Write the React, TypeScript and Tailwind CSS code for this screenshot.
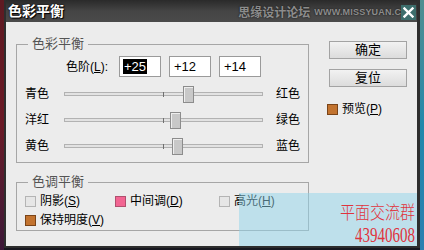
const UI = "font-['Liberation_Sans','Noto_Sans_CJK_SC',sans-serif]"

function Box({ color }: { color?: "orange" | "pink" }) {
  const fill =
    color === "orange"
      ? "bg-[#c2732f] border-[#7a4418]"
      : color === "pink"
        ? "bg-[#f26592] border-[#b0506e]"
        : "bg-[#e6e6e6] border-[#b4b4b4]"
  return <span className={`inline-block h-[11px] w-[11px] shrink-0 border ${fill}`} />
}

function Check({ label, u, color, className = "" }: { label: string; u: string; color?: "orange" | "pink"; className?: string }) {
  return (
    <div className={`flex h-[16px] items-center gap-[4px] ${className}`}>
      <Box color={color} />
      <span className="text-[12px] leading-none">
        {label}(<span className="underline">{u}</span>)
      </span>
    </div>
  )
}

function Slider({ left, right, pos }: { left: string; right: string; pos: number }) {
  return (
    <div className="flex h-[26px] items-center">
      <span className="w-[39px] text-[12px]">{left}</span>
      <div className="relative h-[4px] w-[199px] border border-[#b2b2b2] bg-[#e2e2e2]">
        <span className="absolute left-[98px] top-[-1px] h-[5px] w-px bg-[#6f6f6f]" />
        <span
          className="absolute top-[-7px] h-[17px] w-[11px] border border-[#8c8c8c] bg-[#c8c8c8] shadow-[inset_1px_1px_0_#eee]"
          style={{ left: pos }}
        />
      </div>
      <span className="ml-[13px] text-[12px]">{right}</span>
    </div>
  )
}

function Field({ value, selected }: { value: string; selected?: boolean }) {
  return (
    <div className="flex h-[21px] w-[42px] items-center border border-[#9a9a9a] bg-white pl-[3px] text-[13px]">
      <span className={selected ? "bg-black px-px leading-[15px] text-white" : "px-px leading-[15px]"}>{value}</span>
    </div>
  )
}

export default function App() {
  return (
    <div className={`flex h-[250px] w-[424px] overflow-hidden bg-[#181820] text-black ${UI}`}>
      {/* background behind dialog */}
      <div className="w-[4px] bg-gradient-to-b from-[#5e1a22] via-[#6a1a26] to-[#3c1838]" />

      <div className="relative flex h-[248px] w-[416px] flex-col border-b-2 border-l-2 border-r-[3px] border-[#2e2e2e] bg-[#ececec]">
        {/* title bar */}
        <div className="relative flex h-[22px] items-center bg-gradient-to-b from-[#2a2a2a] via-[#454545] to-[#4a4a4a] pl-[2px]">
          <span className="text-[14px] font-bold text-white [text-shadow:0_0_2px_#000,1px_1px_1px_#000]">色彩平衡</span>
          <div className="ml-auto mr-[1px] mt-[3px] flex items-center gap-[4px] text-[#8c8c8c] [text-shadow:0_0_2px_#111]">
            <span className="text-[12px] font-bold">思缘设计论坛</span>
            <span className="text-[9px] font-bold tracking-[0.2px]">WWW.MISSYUAN.COM</span>
          </div>
          <div className="absolute right-[1px] top-[5px] flex h-[15px] w-[15px] items-center justify-center bg-[#3d6e6c]">
            <svg width="11" height="11" viewBox="0 0 11 11">
              <path d="M1.5 1.5l8 8M9.5 1.5l-8 8" stroke="#fff" strokeWidth="2.4" strokeLinecap="square" />
            </svg>
          </div>
        </div>

        {/* body */}
        <div className="flex flex-1 pl-[10px] pt-[14px]">
          <div className="flex w-[293px] flex-col">
            <fieldset className="border border-[#a6a6a6] px-[8px] pb-[3px]">
              <legend className="ml-[3px] px-[4px] text-[13px] leading-[16px] text-[#555]">色彩平衡</legend>
              <div className="mt-[4px] flex h-[21px] items-center">
                <span className="ml-[41px] w-[45px] text-[12px]">
                  色阶(<span className="underline">L</span>):
                </span>
                <div className="ml-[8px] flex gap-[8px]">
                  <Field value="+25" selected />
                  <Field value="+12" />
                  <Field value="+14" />
                </div>
              </div>
              <div className="mt-[4px]">
                <Slider left="青色" right="红色" pos={118} />
                <Slider left="洋红" right="绿色" pos={105} />
                <Slider left="黄色" right="蓝色" pos={107} />
              </div>
            </fieldset>

            <fieldset className="mt-[11px] border border-[#a6a6a6] px-[8px] pb-[2px]">
              <legend className="ml-[3px] px-[4px] text-[13px] leading-[16px] text-[#555]">色调平衡</legend>
              <div className="mt-[3px] flex">
                <Check label="阴影" u="S" className="w-[90px]" />
                <Check label="中间调" u="D" color="pink" className="w-[104px]" />
                <Check label="高光" u="H" />
              </div>
              <Check label="保持明度" u="V" color="orange" className="mt-[3px]" />
            </fieldset>
          </div>

          {/* buttons */}
          <div className="ml-[20px] flex w-[78px] flex-col pt-[5px]">
            <button className="flex h-[18px] items-center justify-center border border-[#a3a3a3] bg-gradient-to-b from-[#f2f2f2] to-[#dcdcdc] text-[13px]">
              确定
            </button>
            <button className="mt-[10px] flex h-[18px] items-center justify-center border border-[#a3a3a3] bg-gradient-to-b from-[#f2f2f2] to-[#dcdcdc] text-[13px]">
              复位
            </button>
            <Check label="预览" u="P" color="orange" className="mt-[14px] -ml-[2px]" />
          </div>
        </div>

        {/* watermark overlay */}
        <div className="absolute bottom-0 left-[233px] right-0 top-[193px] overflow-hidden whitespace-nowrap bg-[#8fd3ea]/50 pl-[101px] pt-[9px] text-[#e0333c]">
          <div className="origin-top scale-y-[1.22] font-['Noto_Sans_CJK_SC',sans-serif] text-[15px] font-light leading-[16px]">
            平面交流群
          </div>
          <div className="ml-[15px] mt-[7px] origin-top scale-y-[1.45] font-['Liberation_Serif',serif] text-[15px] leading-[14px]">
            43940608
          </div>
        </div>
      </div>

      <div className="flex-1 bg-gradient-to-b from-[#4f8e90] via-[#2288ab] to-[#2a7fb0]" />
    </div>
  )
}
